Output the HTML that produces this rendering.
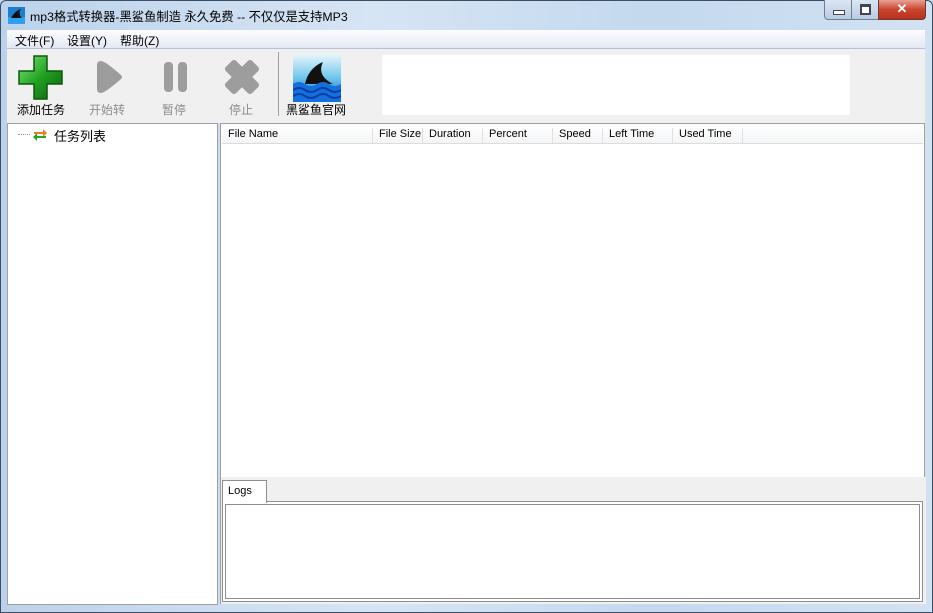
<!DOCTYPE html>
<html><head><meta charset="utf-8"><style>
body{margin:0;width:933px;height:613px;overflow:hidden;font-family:"Liberation Sans","Noto Sans CJK SC",sans-serif;font-size:12px;color:#000;background:#c4d7ec;position:relative}
.abs{position:absolute}
.frame{left:0;top:0;width:933px;height:613px;background:linear-gradient(90deg,#bcd2ea,#d6e5f4 40%,#c4d8ee 70%,#d2e2f2);border-radius:6px 6px 0 0;box-shadow:inset 0 0 0 1px #3b4e66}
.title{left:30px;top:7px;font-size:12.3px}
.menu{left:7px;top:30px;width:918px;height:18px;background:linear-gradient(#fdfdfe,#e4e8f4);border-bottom:1px solid #b7c1d6}
.menu span{position:absolute;top:2px}
.tb{left:7px;top:49px;width:918px;height:74px;background:#f0f0f0}
.lbl{position:absolute;top:52px;font-size:12px;text-align:center}
.gray{color:#8d8d8d}
.panel{background:#fff;border:1px solid #a0a0a0}
.hdr{left:222px;top:126px;width:701px;height:17px;background:linear-gradient(#fff,#f3f4f6);border-bottom:1px solid #dcdcdc}
.hdr span{position:absolute;top:2px;height:15px;border-right:1px solid #e0e0e0;padding-left:6px;box-sizing:border-box;font-size:11px}
</style></head><body>
<div class="abs frame"></div>
<svg class="abs" style="left:8px;top:7px" width="17" height="17"><rect width="17" height="17" fill="#1a7fd0"/><rect y="10" width="17" height="7" fill="#2ea0ee"/><path d="M3 11 C6 6,9 3,13 2 C11 5,11 8,14 11Z" fill="#111"/></svg>
<div class="abs title">mp3格式转换器-黑鲨鱼制造 永久免费 -- 不仅仅是支持MP3</div>
<div class="abs" style="left:824px;top:0;width:26px;height:19px;background:linear-gradient(#dbe6f3,#b9cbe1);border:1px solid #6d7f96;border-top:none;border-radius:0 0 0 4px"><div style="position:absolute;left:8px;top:10px;width:10px;height:3px;background:#fff;border:1px solid #445"></div></div>
<div class="abs" style="left:851px;top:0;width:26px;height:19px;background:linear-gradient(#dbe6f3,#b9cbe1);border:1px solid #6d7f96;border-top:none"><div style="position:absolute;left:8px;top:4px;width:7px;height:6px;border:2px solid #445;border-top-width:3px;background:#fff"></div></div>
<div class="abs" style="left:878px;top:0;width:46px;height:19px;background:linear-gradient(#e8a193,#c9462f 50%,#b8301c);border:1px solid #6d3a30;border-top:none;border-radius:0 0 4px 0;color:#fff;font-weight:bold;text-align:center;font-size:13px;line-height:17px">✕</div>
<div class="abs menu"><span style="left:8px">文件(F)</span><span style="left:60px">设置(Y)</span><span style="left:113px">帮助(Z)</span></div>
<div class="abs tb">
<svg style="position:absolute;left:10px;top:5px" width="47" height="47"><defs><linearGradient id="g" x1="0" y1="0" x2="1" y2="1"><stop offset="0" stop-color="#7ee87e"/><stop offset=".5" stop-color="#21a121"/><stop offset="1" stop-color="#0b5e0b"/></linearGradient></defs><path d="M17 2H30V17H45V30H30V45H17V30H2V17H17Z" fill="url(#g)" stroke="#0a5a0a" stroke-width="1.5"/></svg>
<svg style="position:absolute;left:90px;top:10px" width="26" height="36"><path d="M4 2 Q0 2 0 6V30Q0 34 4 34Q8 34 24 20Q26 18 24 16Q8 2 4 2Z" fill="#9d9d9d"/></svg>
<svg style="position:absolute;left:157px;top:13px" width="24" height="30"><rect x="0" y="0" width="9" height="30" rx="4" fill="#9d9d9d"/><rect x="14" y="0" width="9" height="30" rx="4" fill="#9d9d9d"/></svg>
<svg style="position:absolute;left:215px;top:8px" width="40" height="40"><path d="M6 12L12 6 20 14 28 6 34 12 26 20 34 28 28 34 20 26 12 34 6 28 14 20Z" fill="#9d9d9d" stroke="#9d9d9d" stroke-width="6" stroke-linejoin="round"/></svg>
<div style="position:absolute;left:271px;top:3px;width:1px;height:64px;background:#a0a0a0"></div>
<svg style="position:absolute;left:286px;top:5px" width="48" height="48"><defs><linearGradient id="s" x1="0" y1="0" x2="0" y2="1"><stop offset="0" stop-color="#e9f6fb"/><stop offset=".5" stop-color="#6ec6ec"/><stop offset="1" stop-color="#0d5fc9"/></linearGradient></defs><rect width="48" height="48" fill="url(#s)"/><path d="M12 30C14 20 20 12 30 8C26 16 28 24 40 30Z" fill="#111"/><path d="M0 30q6-4 12 0t12 0 12 0 12 0V48H0Z" fill="#1470dc"/><path d="M0 36q6-4 12 0t12 0 12 0 12 0M0 42q6-4 12 0t12 0 12 0 12 0" stroke="#0b3ea8" stroke-width="2" fill="none"/></svg>
<div class="lbl" style="left:10px">添加任务</div>
<div class="lbl gray" style="left:82px">开始转</div>
<div class="lbl gray" style="left:155px">暂停</div>
<div class="lbl gray" style="left:222px">停止</div>
<div class="lbl" style="left:279px">黑鲨鱼官网</div>
<div style="position:absolute;left:375px;top:6px;width:468px;height:60px;background:#fff"></div>
</div>
<div class="abs panel" style="left:7px;top:123px;width:209px;height:480px"></div>
<div class="abs" style="left:18px;top:134px;width:12px;border-top:1px dotted #999"></div>
<svg class="abs" style="left:32px;top:127px" width="16" height="14"><path d="M2 5h9V2l4 4-4 4V7H2Z" fill="#e8831a"/><path d="M14 9H5V6L1 10l4 4v-3h9Z" fill="#2aa52a"/></svg>
<div class="abs" style="left:54px;top:126px;font-size:13px">任务列表</div>
<div class="abs panel" style="left:220px;top:123px;width:703px;height:353px"></div>
<div class="abs hdr"><span style="left:0;width:151px">File Name</span><span style="left:151px;width:50px">File Size</span><span style="left:201px;width:60px">Duration</span><span style="left:261px;width:70px">Percent</span><span style="left:331px;width:50px">Speed</span><span style="left:381px;width:70px">Left Time</span><span style="left:451px;width:70px">Used Time</span></div>
<div class="abs" style="left:220px;top:477px;width:705px;height:127px;background:#f0f0f0;border-left:1px solid #a0a0a0"></div>
<div class="abs" style="left:222px;top:480px;width:43px;height:22px;background:#fff;border:1px solid #8e8e8e;border-bottom:none;z-index:2"><span style="position:absolute;left:5px;top:4px;font-size:11px">Logs</span></div>
<div class="abs" style="left:222px;top:501px;width:699px;height:99px;background:#fff;border:1px solid #8e8e8e"><div style="position:absolute;left:2px;top:2px;right:2px;bottom:2px;border:1px solid #8e8e8e"></div></div>
</body></html>
